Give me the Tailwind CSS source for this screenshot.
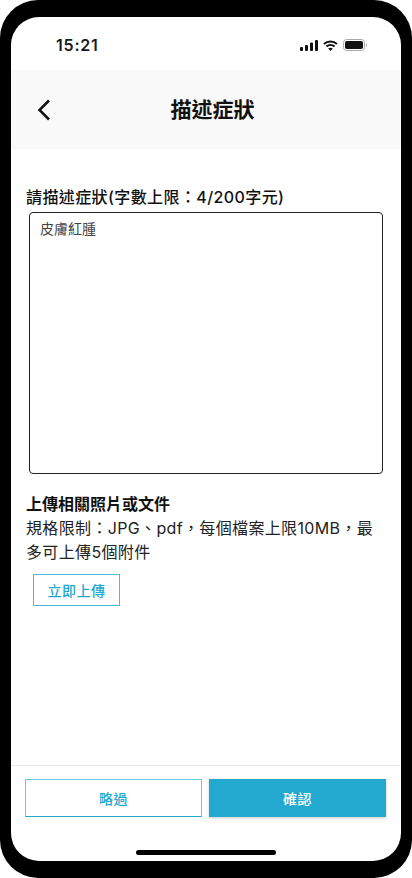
<!DOCTYPE html>
<html lang="zh-Hant">
<head>
  <meta charset="UTF-8" />
  <meta name="viewport" content="width=device-width, initial-scale=1.0"/>
  <title>描述症狀</title>
  <script src="https://cdn.jsdelivr.net/npm/@tailwindcss/browser@4"></script>
</head>
<body class="bg-white">
  <!-- Phone frame -->
  <div class="w-[412px] h-[878px] bg-black rounded-[38px] pt-[17px] px-[11px] pb-[17px] font-['Inter','Noto_Sans_CJK_TC',sans-serif]">
    <div class="h-[844px] bg-white rounded-[28px] overflow-hidden flex flex-col relative">

      <!-- Status bar -->
      <div class="h-[53px] shrink-0 flex items-start justify-between pt-[19px] pl-[45px] pr-[34px]">
        <span class="text-[16px] leading-[18px] font-semibold tracking-[0.8px] text-[#1a1a1a]">15:21</span>
        <div class="flex items-center gap-[5px] h-[18px]">
          <svg width="18" height="11" viewBox="0 0 18 11" fill="#111"><rect x="0" y="7" width="3" height="4" rx="1"/><rect x="5" y="5" width="3" height="6" rx="1"/><rect x="10" y="2.500" width="3" height="8.500" rx="1"/><rect x="15" y="0" width="3" height="11" rx="1"/></svg>
          <svg width="15" height="11" viewBox="0 0 15 11" fill="none" stroke="#111" stroke-width="2"><path d="M1 3.900C4.600.6 10.400.6 14 3.900"/><path d="M3.400 6.500c2.300-2 5.900-2 8.200 0"/><path d="M7.500 11 5.200 8.600c1.300-1.100 3.300-1.100 4.600 0z" fill="#111" stroke="none"/></svg>
          <svg width="24" height="12" viewBox="0 0 24 12" fill="none"><rect x=".5" y=".5" width="21" height="11" rx="3" stroke="#aaa"/><rect x="2" y="2" width="18" height="8" rx="1.800" fill="#111"/><path d="M23 4v4c.7-.3 1-1.200 1-2s-.3-1.700-1-2z" fill="#aaa"/></svg>
        </div>
      </div>

      <!-- Header -->
      <div class="h-[79px] shrink-0 bg-[#f9f9f9] relative flex items-center justify-center pl-[13px]">
        <svg class="absolute left-[26px] top-[29px]" width="14" height="22" viewBox="0 0 14 22" fill="none" stroke="#111" stroke-width="2.500"><path d="M12 1.500 2.500 11l9.500 9.500"/></svg>
        <h1 class="text-[21px] leading-[28px] font-bold text-[#111]">描述症狀</h1>
      </div>

      <!-- Form -->
      <div class="flex-1 pl-[15px] pr-[18px] pt-[37px]">
        <p class="text-[16px] leading-[22px] font-medium tracking-[0.4px] text-[#111]">請描述症狀(字數上限：4/200字元)</p>
        <div class="mt-[4px] ml-[3px] w-[354px] h-[262px] border border-[#222] rounded-[4px] px-[10px] pt-[6px] text-[14px] leading-[20px] text-[#444]">皮膚紅腫</div>
        <p class="mt-[19px] text-[16px] leading-[22px] font-semibold text-[#111]">上傳相關照片或文件</p>
        <p class="mt-px text-[16px] leading-[24px] tracking-[0.35px] text-[#222]">規格限制：JPG、pdf，每個檔案上限10MB，最多可上傳5個附件</p>
        <button class="mt-[10px] ml-[7px] w-[87px] h-[32px] border-[1.5px] border-[#4dbad9] text-[#23a9cf] text-[14px] font-medium tracking-[0.5px] flex items-center justify-center">立即上傳</button>
      </div>

      <!-- Bottom actions -->
      <div class="h-[96px] shrink-0 border-t border-[#e8e8e8] pt-[13px] px-[14px] flex gap-[7px]">
        <button class="w-[177px] h-[38px] border-[1.5px] border-[#6cc7e0] border-b-[#23a9cf] text-[#23a9cf] text-[14px] font-medium tracking-[0.5px]">略過</button>
        <button class="w-[177px] h-[38px] bg-[#23a9cf] shadow-[0_1px_3px_rgba(0,0,0,0.2)] text-white text-[14px] font-medium tracking-[0.5px]">確認</button>
      </div>

      <!-- Home indicator -->
      <div class="absolute left-[125px] bottom-[6px] w-[140px] h-[5px] rounded-full bg-black"></div>
    </div>
  </div>
</body>
</html>
